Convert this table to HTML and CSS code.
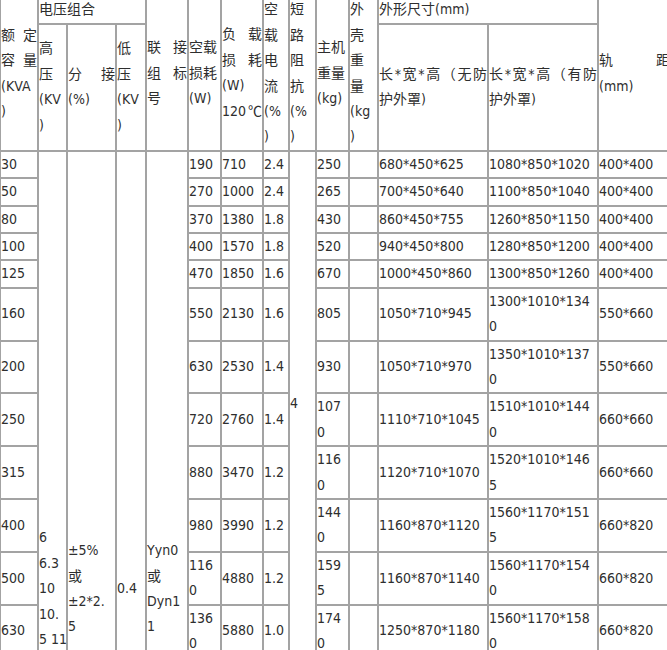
FILE: index.html
```html
<!DOCTYPE html>
<html lang="zh-CN">
<head>
<meta charset="utf-8">
<title>变压器技术参数</title>
<link rel="stylesheet" href="styles.css">
</head>
<body>
<table class="spec">
  <colgroup>
    <col class="c1"><col class="c2"><col class="c3"><col class="c4"><col class="c5"><col class="c6"><col class="c7">
    <col class="c8"><col class="c9"><col class="c10"><col class="c11"><col class="c12"><col class="c13"><col class="c14">
  </colgroup>
  <thead>
    <tr class="h1">
      <th rowspan="2"><span class="j">额定</span><span class="j">容量</span>(KVA<br>)</th>
      <th colspan="3">电压组合</th>
      <th rowspan="2"><span class="j">联接</span><span class="j">组标</span>号</th>
      <th rowspan="2">空载<br>损耗<br>(W)</th>
      <th rowspan="2"><span class="j">负载</span><span class="j">损耗</span>(W)<span class="j">120<span class="cjk">℃</span></span></th>
      <th rowspan="2">空<br>载<br>电<br>流<br>(%<br>)</th>
      <th rowspan="2">短<br>路<br>阻<br>抗<br>(%<br>)</th>
      <th rowspan="2">主机<br>重量<br>(kg)</th>
      <th rowspan="2">外<br>壳<br>重<br>量<br>(kg<br>)</th>
      <th colspan="2">外形尺寸(mm)</th>
      <th rowspan="2"><span class="j">轨距</span>(mm)</th>
    </tr>
    <tr>
      <th>高<br>压<br>(KV<br>)</th>
      <th><span class="j">分接</span>(%)</th>
      <th>低<br>压<br>(KV<br>)</th>
      <th><span class="j">长*宽*高（无防</span>护外罩)</th>
      <th><span class="j">长*宽*高（有防</span>护外罩)</th>
    </tr>
  </thead>
  <tbody>
    <tr>
      <td>30</td>
      <td rowspan="19" class="nw">6<br>6.3<br>10<br>10.<br>5 11</td>
      <td rowspan="19" class="nw">±5%<br>或<br>±2*2.<br>5</td>
      <td rowspan="19">0.4</td>
      <td rowspan="19" class="nw">Yyn0<br>或<br>Dyn1<br>1</td>
      <td>190</td><td>710</td><td>2.4</td>
      <td rowspan="12">4</td>
      <td>250</td><td></td><td>680*450*625</td><td>1080*850*1020</td><td>400*400</td>
    </tr>
    <tr><td>50</td><td>270</td><td>1000</td><td>2.4</td><td>265</td><td></td><td>700*450*640</td><td>1100*850*1040</td><td>400*400</td></tr>
    <tr><td>80</td><td>370</td><td>1380</td><td>1.8</td><td>430</td><td></td><td>860*450*755</td><td>1260*850*1150</td><td>400*400</td></tr>
    <tr><td>100</td><td>400</td><td>1570</td><td>1.8</td><td>520</td><td></td><td>940*450*800</td><td>1280*850*1200</td><td>400*400</td></tr>
    <tr><td>125</td><td>470</td><td>1850</td><td>1.6</td><td>670</td><td></td><td>1000*450*860</td><td>1300*850*1260</td><td>400*400</td></tr>
    <tr><td>160</td><td>550</td><td>2130</td><td>1.6</td><td>805</td><td></td><td>1050*710*945</td><td>1300*1010*1340</td><td>550*660</td></tr>
    <tr><td>200</td><td>630</td><td>2530</td><td>1.4</td><td>930</td><td></td><td>1050*710*970</td><td>1350*1010*1370</td><td>550*660</td></tr>
    <tr><td>250</td><td>720</td><td>2760</td><td>1.4</td><td>1070</td><td></td><td>1110*710*1045</td><td>1510*1010*1440</td><td>660*660</td></tr>
    <tr><td>315</td><td>880</td><td>3470</td><td>1.2</td><td>1160</td><td></td><td>1120*710*1070</td><td>1520*1010*1465</td><td>660*660</td></tr>
    <tr><td>400</td><td>980</td><td>3990</td><td>1.2</td><td>1440</td><td></td><td>1160*870*1120</td><td>1560*1170*1515</td><td>660*820</td></tr>
    <tr><td>500</td><td>1160</td><td>4880</td><td>1.2</td><td>1595</td><td></td><td>1160*870*1140</td><td>1560*1170*1540</td><td>660*820</td></tr>
    <tr><td>630</td><td>1360</td><td>5880</td><td>1.0</td><td>1740</td><td></td><td>1250*870*1180</td><td>1560*1170*1580</td><td>660*820</td></tr>
    <tr><td>800</td><td>1640</td><td>6960</td><td>1.0</td><td rowspan="7">6</td><td>2010</td><td></td><td>1300*870*1250</td><td>1660*1170*1600</td><td>660*820</td></tr>
    <tr><td>1000</td><td>1900</td><td>8130</td><td>1.0</td><td>2300</td><td></td><td>1350*1000*1300</td><td>1700*1300*1650</td><td>820*820</td></tr>
    <tr><td>1250</td><td>2240</td><td>9690</td><td>1.0</td><td>2710</td><td></td><td>1400*1000*1350</td><td>1750*1300*1700</td><td>820*820</td></tr>
    <tr><td>1600</td><td>2640</td><td>11700</td><td>1.0</td><td>3200</td><td></td><td>1500*1000*1420</td><td>1850*1300*1780</td><td>820*820</td></tr>
    <tr><td>2000</td><td>3240</td><td>14400</td><td>0.8</td><td>3900</td><td></td><td>1600*1150*1500</td><td>1950*1450*1850</td><td>1070*1070</td></tr>
    <tr><td>2500</td><td>3830</td><td>17100</td><td>0.8</td><td>4600</td><td></td><td>1700*1150*1600</td><td>2050*1450*1950</td><td>1070*1070</td></tr>
    <tr><td>3150</td><td>4600</td><td>20000</td><td>0.7</td><td>5500</td><td></td><td>1800*1300*1700</td><td>2150*1600*2050</td><td>1070*1070</td></tr>
  </tbody>
</table>
</body>
</html>
```

FILE: styles.css
```css
html {
  overflow: hidden;
  background: #fff;
}

body {
  margin: 0;
  font-family: "DejaVu Sans Condensed", "Noto Sans CJK SC", sans-serif;
  font-size: 14px;
  line-height: 25.4px;
  color: #2e2e2e;
}

.spec {
  border-collapse: separate;
  border-spacing: 0;
  table-layout: fixed;
  width: 671px;
  margin-top: -3.7px;
}

.spec th,
.spec td {
  border: 1px solid #a3a3a3;
  padding: 0;
  text-align: left;
  vertical-align: middle;
  font-weight: normal;
  word-break: break-all;
}

.spec .h1 {
  height: 27.4px;
}

.spec .nw {
  white-space: nowrap;
}

.j {
  display: block;
  text-align: justify;
  text-align-last: justify;
}

.cjk {
  font-family: "Noto Sans CJK SC", sans-serif;
}

.c1 { width: 38px; }
.c2 { width: 29px; }
.c3 { width: 49px; }
.c4 { width: 30px; }
.c5 { width: 42px; }
.c6 { width: 33px; }
.c7 { width: 42px; }
.c8 { width: 26px; }
.c9 { width: 27px; }
.c10 { width: 33px; }
.c11 { width: 29px; }
.c12 { width: 110px; }
.c13 { width: 110px; }
.c14 { width: 73px; }
```
